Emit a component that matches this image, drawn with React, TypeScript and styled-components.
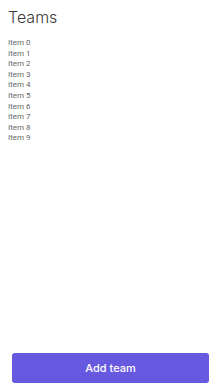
import styled, { createGlobalStyle } from 'styled-components';

const GlobalStyle = createGlobalStyle`
  html, body {
    margin: 0;
    padding: 0;
    background: #ffffff;
  }
  #root {
    height: 390px;
  }
`;

const Screen = styled.div`
  height: 390px;
  display: flex;
  flex-direction: column;
  box-sizing: border-box;
  padding: 0 7px 7px 8px;
  font-family: 'Inter', 'Roboto', sans-serif;
`;

const Title = styled.h1`
  margin: 7px 0 0 0;
  font-family: 'Inter', sans-serif;
  font-size: 16px;
  font-weight: 300;
  color: #3a3a3a;
  line-height: 20px;
`;

const ItemList = styled.ul`
  list-style: none;
  margin: 11px 0 0 0;
  padding: 0;
  flex: 1;
`;

const Item = styled.li`
  font-family: 'Roboto', sans-serif;
  font-size: 8px;
  line-height: 10.6px;
  color: #666666;
`;

const AddButton = styled.button`
  margin-left: 4px;
  height: 30px;
  border: none;
  border-radius: 3px;
  background-color: #6659e0;
  color: #ffffff;
  font-family: 'Inter', sans-serif;
  font-size: 11px;
  font-weight: 500;
  cursor: pointer;
`;

const items = Array.from({ length: 10 }, (_, i) => `Item ${i}`);

const App = () => {
  return (
    <>
      <GlobalStyle />
      <Screen>
        <Title>Teams</Title>
        <ItemList>
          {items.map((item) => (
            <Item key={item}>{item}</Item>
          ))}
        </ItemList>
        <AddButton>Add team</AddButton>
      </Screen>
    </>
  );
};

export default App;
